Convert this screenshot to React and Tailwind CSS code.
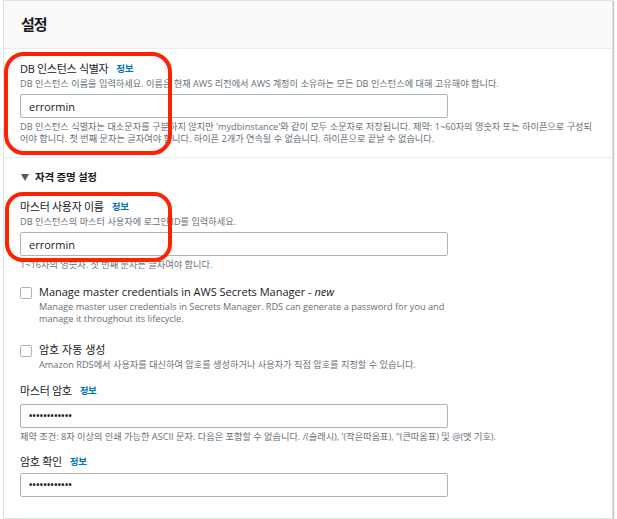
import React from "react";

const FONT = { fontFamily: '"Open Sans", "Noto Sans CJK KR", sans-serif' };

function Info() {
  return <span className="ml-[8px] text-[9.5px] font-bold tracking-[-0.3px] text-[#0073bb]">정보</span>;
}

function Input({ value, password }) {
  return (
    <div className="mt-[3px] flex h-[24px] w-[428px] items-center rounded-[2px] border border-[#aab7b8] bg-white pl-[8px]">
      {password ? (
        <span className="text-[8.5px] font-bold leading-none tracking-[0.4px] text-[#16191f]">{value}</span>
      ) : (
        <span className="text-[11px] leading-none text-[#16191f]">{value}</span>
      )}
    </div>
  );
}

function Label({ children }) {
  return (
    <div className="flex items-center text-[11px] leading-[16px] tracking-[-0.3px] text-[#16191f]">
      {children}
      <Info />
    </div>
  );
}

function Desc({ children, className = "" }) {
  return <div className={"text-[9.2px] leading-[14px] text-[#687078] " + className}>{children}</div>;
}

function Checkbox({ title, desc }) {
  return (
    <div className="flex items-start gap-[7px]">
      <div className="mt-[4px] h-[12px] w-[12px] shrink-0 rounded-[2px] border border-[#aab7b8] bg-white" />
      <div>
        <div className="text-[11px] leading-[18px] text-[#16191f]">{title}</div>
        <div className="text-[9.2px] leading-[12px] text-[#687078]">{desc}</div>
      </div>
    </div>
  );
}

export default function App() {
  return (
    <div className="relative h-[519px] w-[617px] overflow-hidden bg-white" style={FONT}>
      <div className="ml-[3px] w-[610px] border border-[#dfe3e3] bg-white shadow-[1px_1px_1px_rgba(0,28,36,0.25)]">
        <div className="flex h-[48px] items-center border-b border-[#eaeded] bg-[#fafafa] pl-[17px]">
          <h2 className="text-[15px] font-bold leading-none tracking-[-1px] text-[#16191f]">설정</h2>
        </div>
        <div className="border-b border-[#eaeded] px-[16px] pb-[12px] pt-[12px]">
          <Label>DB 인스턴스 식별자</Label>
          <Desc>DB 인스턴스 이름을 입력하세요. 이름은 현재 AWS 리전에서 AWS 계정이 소유하는 모든 DB 인스턴스에 대해 고유해야 합니다.</Desc>
          <Input value="errormin" />
          <div className="mt-[3px] text-[9.2px] leading-[12px] text-[#687078]">
            DB 인스턴스 식별자는 대소문자를 구분하지 않지만 'mydbinstance'와 같이 모두 소문자로 저장됩니다. 제약: 1~60자의 영숫자 또는 하이픈으로 구성되어야 합니다. 첫 번째 문자는 글자여야 합니다. 하이픈 2개가 연속될 수 없습니다. 하이픈으로 끝날 수 없습니다.
          </div>
        </div>
        <div className="px-[16px] pb-[21px] pt-[10px]">
          <div className="flex items-center text-[10.5px] font-bold leading-[18px] tracking-[-0.2px] text-[#16191f]">
            <svg width="8" height="7" viewBox="0 0 8 7" className="ml-[1px] mr-[6px]">
              <path d="M0 0 H8 L4 7 Z" fill="#545b64" />
            </svg>
            자격 증명 설정
          </div>
          <div className="mt-[13px]">
            <Label>마스터 사용자 이름</Label>
            <Desc>DB 인스턴스의 마스터 사용자에 로그인 ID를 입력하세요.</Desc>
            <Input value="errormin" />
            <div className="mt-[3px] text-[9.2px] leading-[12px] text-[#687078]">1~16자의 영숫자. 첫 번째 문자는 글자여야 합니다.</div>
          </div>
          <div className="mt-[12px]">
            <Checkbox
              title={<>Manage master credentials in AWS Secrets Manager - <i>new</i></>}
              desc={<>Manage master user credentials in Secrets Manager. RDS can generate a password for you and<br />manage it throughout its lifecycle.</>}
            />
          </div>
          <div className="mt-[16px]">
            <Checkbox title="암호 자동 생성" desc="Amazon RDS에서 사용자를 대신하여 암호를 생성하거나 사용자가 직접 암호를 지정할 수 있습니다." />
          </div>
          <div className="mt-[12px]">
            <Label>마스터 암호</Label>
            <div className="mt-[5px]">
              <Input value="••••••••••••" password />
            </div>
            <div className="mt-[3px] text-[9.2px] leading-[12px] text-[#687078]">
              제약 조건: 8자 이상의 인쇄 가능한 ASCII 문자. 다음은 포함할 수 없습니다. /(슬래시), '(작은따옴표), "(큰따옴표) 및 @(앳 기호).
            </div>
          </div>
          <div className="mt-[11px]">
            <Label>암호 확인</Label>
            <div className="mt-[2px]">
              <Input value="••••••••••••" password />
            </div>
          </div>
        </div>
      </div>
      <div className="pointer-events-none absolute left-[4px] top-[52px] h-[103px] w-[168px] rounded-[20px] border-[4px] border-[#ff2200]" />
      <div className="pointer-events-none absolute left-[5px] top-[192px] h-[70px] w-[167px] rounded-[18px] border-[4px] border-[#ff2200]" />
    </div>
  );
}
